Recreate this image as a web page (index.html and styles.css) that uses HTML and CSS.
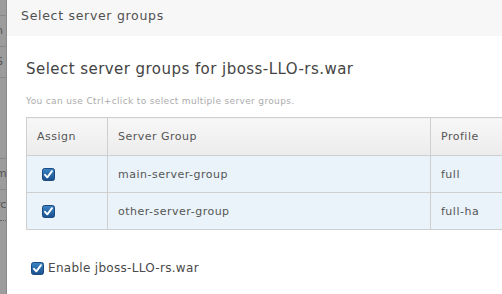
FILE: index.html
```html
<!DOCTYPE html>
<html>
<head>
<meta charset="utf-8">
<link rel="stylesheet" href="styles.css">
</head>
<body>
<div class="page">
  <div class="backdrop">
    <div class="bd-row">n</div>
    <div class="bd-row">S</div>
    <div class="bd-row tall"></div>
    <div class="bd-row">m</div>
    <div class="bd-row dotted">rc</div>
  </div>
  <div class="modal">
    <div class="modal-header">Select server groups</div>
    <div class="modal-body">
      <h2 class="title">Select server groups for jboss-LLO-rs.war</h2>
      <p class="hint">You can use Ctrl+click to select multiple server groups.</p>
      <table class="grid">
        <thead>
          <tr><th class="c-assign">Assign</th><th class="c-group">Server Group</th><th class="c-profile">Profile</th></tr>
        </thead>
        <tbody>
          <tr>
            <td class="c-assign"><span class="cb"><svg width="13" height="13" viewBox="0 0 13 13"><defs><linearGradient id="g1" x1="0" y1="0" x2="0" y2="1"><stop offset="0" stop-color="#3d85c6"/><stop offset="1" stop-color="#1b4f8e"/></linearGradient></defs><rect x="0.5" y="0.5" width="12" height="12" rx="2" fill="url(#g1)" stroke="#1a4a80"/><path d="M3 6.8 L5.3 9.3 L10 3.2" fill="none" stroke="#fff" stroke-width="1.9" stroke-linecap="round" stroke-linejoin="round"/></svg></span></td>
            <td class="c-group">main-server-group</td>
            <td class="c-profile">full</td>
          </tr>
          <tr>
            <td class="c-assign"><span class="cb"><svg width="13" height="13" viewBox="0 0 13 13"><rect x="0.5" y="0.5" width="12" height="12" rx="2" fill="url(#g1)" stroke="#1a4a80"/><path d="M3 6.8 L5.3 9.3 L10 3.2" fill="none" stroke="#fff" stroke-width="1.9" stroke-linecap="round" stroke-linejoin="round"/></svg></span></td>
            <td class="c-group">other-server-group</td>
            <td class="c-profile">full-ha</td>
          </tr>
        </tbody>
      </table>
      <label class="enable"><span class="cb"><svg width="13" height="13" viewBox="0 0 13 13"><rect x="0.5" y="0.5" width="12" height="12" rx="2" fill="url(#g1)" stroke="#1a4a80"/><path d="M3 6.8 L5.3 9.3 L10 3.2" fill="none" stroke="#fff" stroke-width="1.9" stroke-linecap="round" stroke-linejoin="round"/></svg></span>Enable jboss-LLO-rs.war</label>
    </div>
  </div>
</div>
</body>
</html>
```

FILE: styles.css
```css
html, body {
  margin: 0;
  padding: 0;
  width: 502px;
  height: 294px;
  overflow: hidden;
  background: #fff;
  font-family: "DejaVu Sans", sans-serif;
  color: #4a4a4a;
}
.page {
  display: flex;
  height: 294px;
}
.backdrop {
  width: 6px;
  flex: none;
  background: #9c9c9c;
  border-right: 1px solid #8a8a8a;
  overflow: hidden;
  font-size: 11px;
  color: #555;
  display: flex;
  flex-direction: column;
}
.bd-row {
  height: 30px;
  border-top: 1px solid #888;
  line-height: 30px;
  text-indent: -4px;
  white-space: nowrap;
}
.bd-row:first-child { margin-top: 15px; }
.bd-row.tall { height: 80px; }
.bd-row.dotted { border-bottom: 1px dotted #666; }
.modal {
  flex: 1;
  min-width: 0;
  background: #fff;
}
.modal-header {
  height: 36px;
  background: #f7f7f7;
  padding-left: 14px;
  font-size: 12.5px;
  letter-spacing: 0.7px;
  line-height: 32px;
  color: #505050;
  white-space: nowrap;
}
.modal-body {
  padding: 24px 0 0 19px;
}
.title {
  margin: 0;
  font-size: 15px;
  letter-spacing: 0.45px;
  font-weight: normal;
  line-height: 18px;
  color: #444;
  white-space: nowrap;
}
.hint {
  margin: 18px 0 0;
  font-size: 9px;
  letter-spacing: 0.35px;
  line-height: 10px;
  color: #ababab;
  white-space: nowrap;
}
.grid {
  margin-top: 11px;
  border-collapse: collapse;
  width: 560px;
  font-size: 11px;
  letter-spacing: 0.5px;
  color: #555;
}
.grid th, .grid td {
  border: 1px solid #cfcfcf;
  text-align: left;
  font-weight: normal;
  padding: 0 10px;
  white-space: nowrap;
}
.grid th {
  height: 37px;
  background: linear-gradient(#f7f7f7, #ececec);
}
.grid td {
  height: 36px;
  background: #e9f3f9;
}
.c-assign { width: 60px; }
.c-group { width: 302px; }
.c-assign .cb { margin-left: 5px; }
.cb {
  display: inline-block;
  width: 13px;
  height: 13px;
  vertical-align: middle;
}
.cb svg { display: block; }
.enable {
  display: flex;
  align-items: center;
  gap: 4px;
  margin: 31px 0 0 5px;
  font-size: 12px;
  letter-spacing: 0.3px;
  color: #4a4a4a;
  white-space: nowrap;
}
```
